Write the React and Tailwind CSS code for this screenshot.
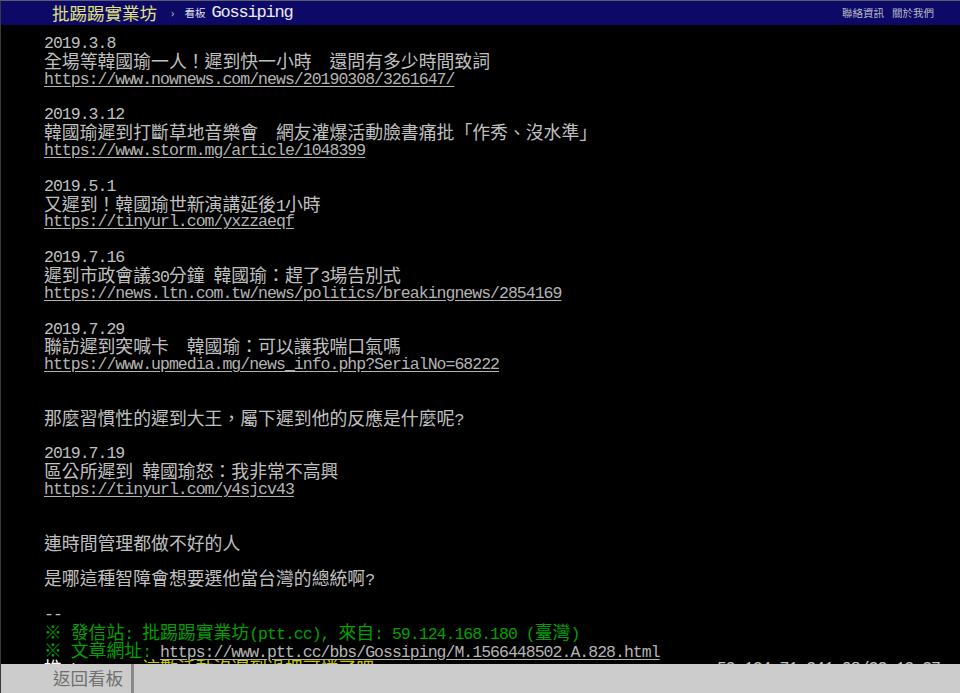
import React from 'react';

// split a line into half-width (ascii) and full-width runs so columns line up like a terminal
function Mix({ text }) {
  const parts = text.match(/[\x00-\x7F]+|[^\x00-\x7F]+/g) || [];
  return parts.map((p, i) =>
    /^[\x00-\x7F]/.test(p) ? (
      <span key={i} className="font-['Liberation_Mono',monospace] text-[16.5px] tracking-[-0.98px]">{p}</span>
    ) : (
      <span key={i} className="font-['Noto_Sans_CJK_TC','Noto_Sans_CJK_SC',sans-serif] text-[17.85px]">{p}</span>
    )
  );
}

const lines = [
  { t: '2019.3.8' },
  { t: '全場等韓國瑜一人！遲到快一小時　還問有多少時間致詞' },
  { link: 'https://www.nownews.com/news/20190308/3261647/' },
  { t: '' },
  { t: '2019.3.12' },
  { t: '韓國瑜遲到打斷草地音樂會　網友灌爆活動臉書痛批「作秀、沒水準」' },
  { link: 'https://www.storm.mg/article/1048399' },
  { t: '' },
  { t: '2019.5.1' },
  { t: '又遲到！韓國瑜世新演講延後1小時' },
  { link: 'https://tinyurl.com/yxzzaeqf' },
  { t: '' },
  { t: '2019.7.16' },
  { t: '遲到市政會議30分鐘 韓國瑜：趕了3場告別式' },
  { link: 'https://news.ltn.com.tw/news/politics/breakingnews/2854169' },
  { t: '' },
  { t: '2019.7.29' },
  { t: '聯訪遲到突喊卡　韓國瑜：可以讓我喘口氣嗎' },
  { link: 'https://www.upmedia.mg/news_info.php?SerialNo=68222' },
  { t: '' },
  { t: '' },
  { t: '那麼習慣性的遲到大王，屬下遲到他的反應是什麼呢?' },
  { t: '' },
  { t: '2019.7.19' },
  { t: '區公所遲到 韓國瑜怒：我非常不高興' },
  { link: 'https://tinyurl.com/y4sjcv43' },
  { t: '' },
  { t: '' },
  { t: '連時間管理都做不好的人' },
  { t: '' },
  { t: '是哪這種智障會想要選他當台灣的總統啊?' },
  { t: '' },
  { t: '--' },
];

function Line({ children }) {
  return <div className="h-[17.85px] leading-[17.85px] whitespace-pre">{children}</div>;
}

export default function App() {
  return (
    <div className="w-[960px] h-[693px] flex flex-col overflow-hidden bg-black border-t border-t-[#5d5d70] border-l border-l-[#3a3a3a]">
      {/* top bar */}
      <div className="h-[24px] shrink-0 bg-[#0c0a66] flex items-center pl-[51px] pr-[26px]">
        <span className="font-['Noto_Sans_CJK_TC',sans-serif] text-[17.5px] leading-none text-[#e3e27a]">批踢踢實業坊</span>
        <span className="ml-[14px] text-[11px] text-[#aaaacc] font-['Noto_Sans',sans-serif]">›</span>
        <span className="ml-[10px] text-[10.5px] text-[#dddde8] font-['Noto_Sans_CJK_TC',sans-serif]">看板</span>
        <span className="ml-[6px] font-['Liberation_Mono',monospace] text-[17px] tracking-[-1.2px] text-[#ececf5]">Gossiping</span>
        <div className="ml-auto flex gap-[8px] text-[10.5px] text-[#b8b8c4] font-['Noto_Sans_CJK_TC',sans-serif]">
          <span>聯絡資訊</span>
          <span>關於我們</span>
        </div>
      </div>

      {/* article body */}
      <div className="flex-1 overflow-hidden pt-[9px] pl-[43px] pr-[20px] text-[#c0c0c0]">
        {lines.map((l, i) => (
          <Line key={i}>
            {l.link ? (
              <span className="underline underline-offset-[2px] text-[#b4b4b4]"><Mix text={l.link} /></span>
            ) : (
              <Mix text={l.t} />
            )}
          </Line>
        ))}
        <Line>
          <span className="text-[#00a000]"><Mix text="※ 發信站: 批踢踢實業坊(ptt.cc), 來自: 59.124.168.180 (臺灣)" /></span>
        </Line>
        <Line>
          <span className="text-[#00a000]"><Mix text="※ 文章網址: " /></span>
          <span className="underline underline-offset-[2px] text-[#b4b4b4]"><Mix text="https://www.ptt.cc/bbs/Gossiping/M.1566448502.A.828.html" /></span>
        </Line>
        <div className="h-[17.85px] leading-[17.85px] whitespace-pre flex justify-between">
          <span>
            <span className="text-white"><Mix text="推 " /></span>
            <span className="text-[#ffff55]"><Mix text="kuma66" /></span>
            <span className="text-[#c8c800]"><Mix text=": 這數活動沒遲到過把可憐了吧" /></span>
          </span>
          <span className="text-[#c0c0c0]"><Mix text="59.124.71.241 08/22 12:37" /></span>
        </div>
      </div>

      {/* bottom bar */}
      <div className="h-[29px] shrink-0 bg-[#cccccc] flex items-stretch">
        <div className="w-[130px] flex items-center justify-end pr-[8px] font-['Noto_Sans_CJK_TC',sans-serif] text-[17.5px] text-[#707070]">
          返回看板
        </div>
        <div className="w-[3px] bg-[#8a8a8a]" />
      </div>
    </div>
  );
}
